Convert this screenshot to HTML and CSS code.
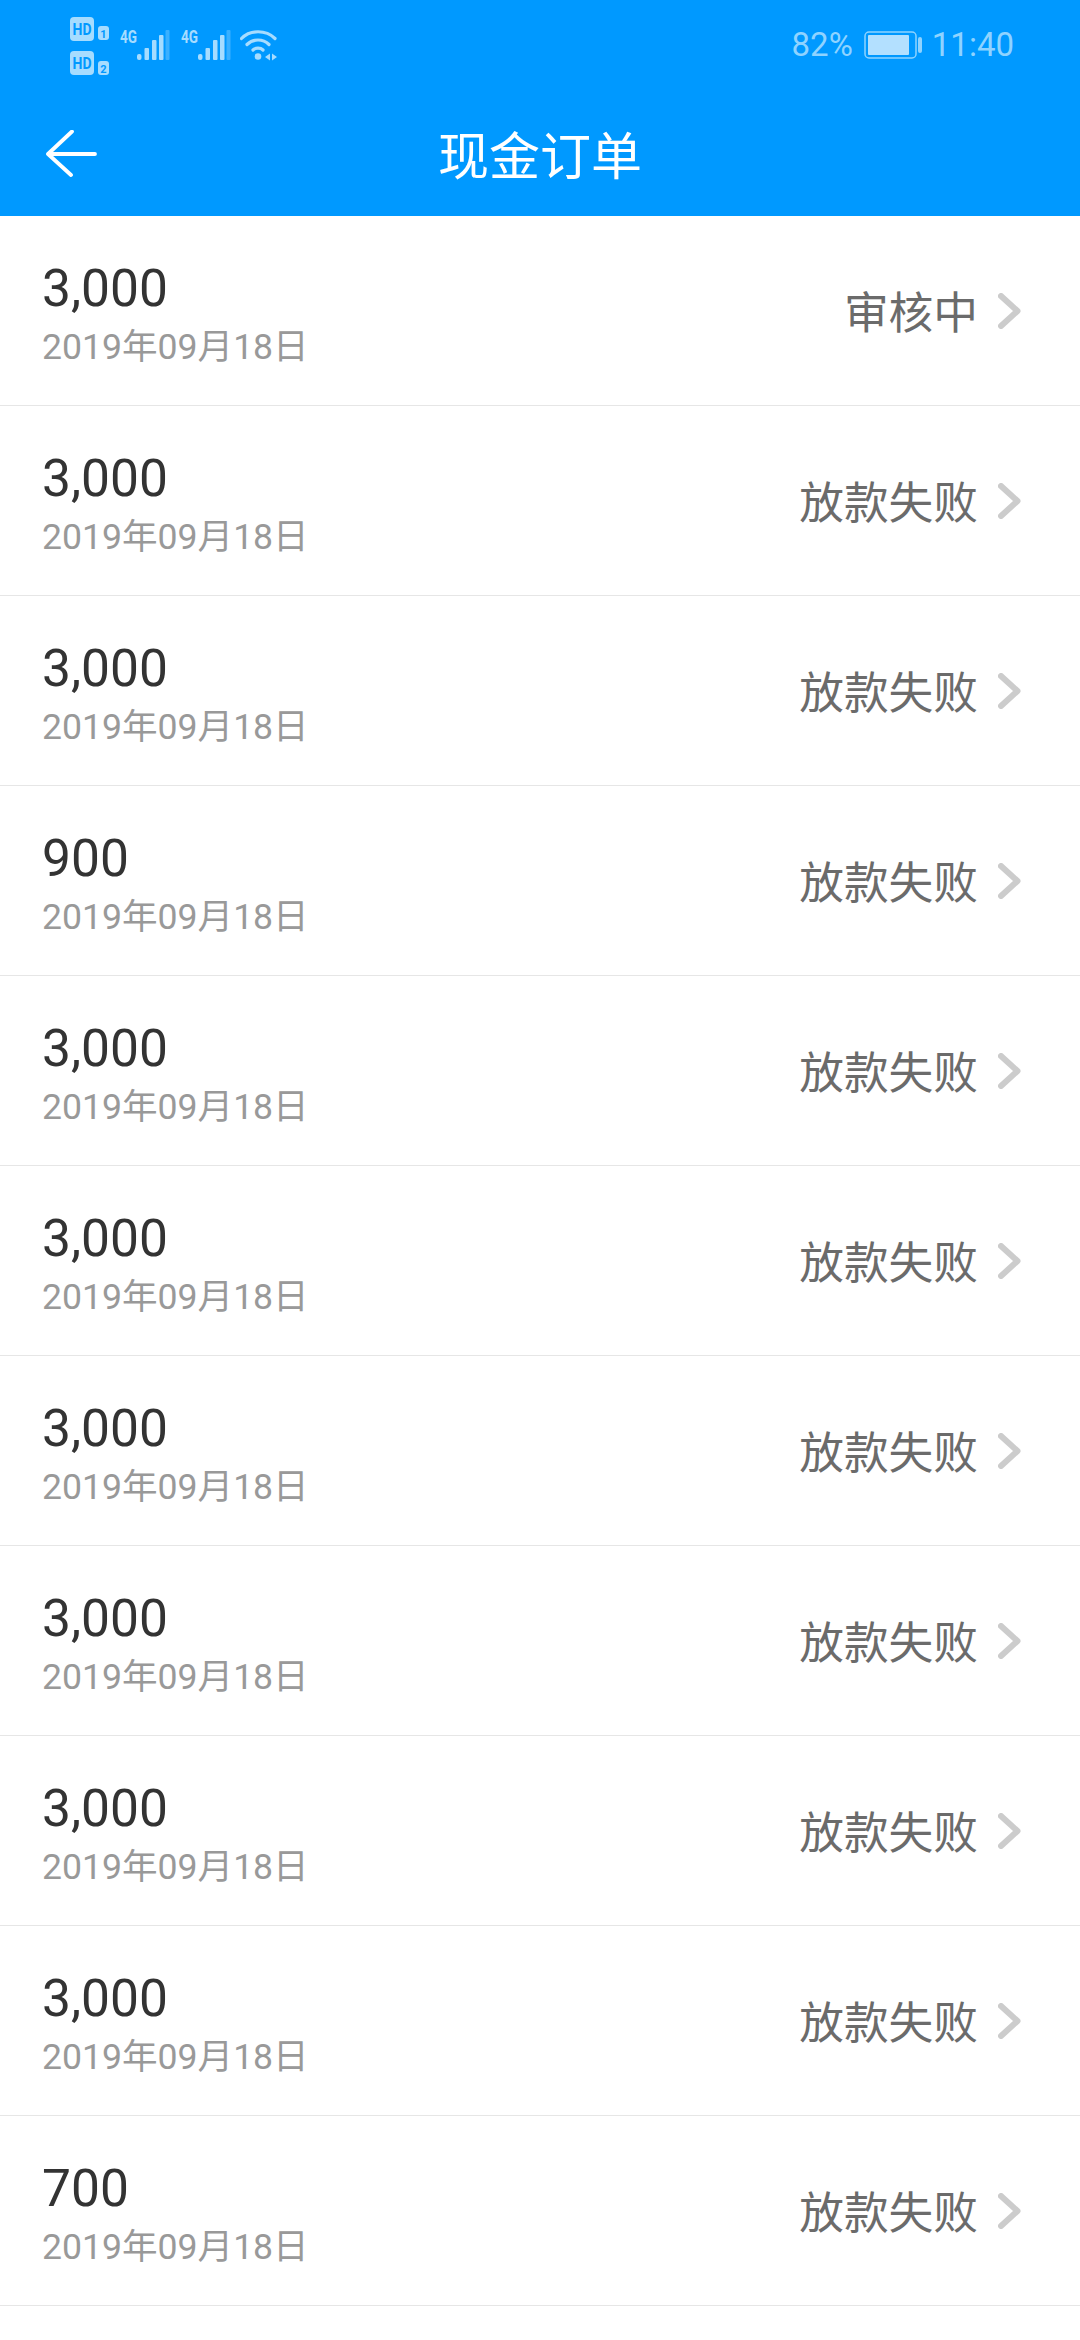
FILE: index.html
```html
<!DOCTYPE html>
<html lang="zh">
<head>
<meta charset="utf-8">
<title>现金订单</title>
<link rel="stylesheet" href="styles.css">
</head>
<body>
<header class="top">
  <div class="status">
    <div class="status-left">
      <svg class="hd" width="40" height="60" viewBox="0 0 40 60">
        <rect x="0" y="0" width="24" height="24" rx="4" fill="#a6dcff"/>
        <text x="12" y="17.500" class="hd-t" textLength="19" lengthAdjust="spacingAndGlyphs">HD</text>
        <rect x="28" y="9" width="11" height="14" rx="3" fill="#a6dcff"/>
        <text x="33.500" y="20.500" class="hd-n">1</text>
        <rect x="0" y="34" width="24" height="24" rx="4" fill="#a6dcff"/>
        <text x="12" y="51.500" class="hd-t" textLength="19" lengthAdjust="spacingAndGlyphs">HD</text>
        <rect x="28" y="44" width="11" height="14" rx="3" fill="#a6dcff"/>
        <text x="33.500" y="55.500" class="hd-n">2</text>
      </svg>
      <svg class="sig" width="52" height="42" viewBox="0 -10 52 42">
        <text x="0" y="13" class="g4" textLength="17" lengthAdjust="spacingAndGlyphs">4G</text>
        <g fill="#a6dcff"><rect x="17" y="24" width="4.500" height="6" rx="2"/><rect x="24.500" y="18" width="4.500" height="12" rx="1"/><rect x="32" y="10" width="4.500" height="20" rx="1"/><rect x="39" y="5" width="4.500" height="25" rx="1"/></g>
        <rect x="45.500" y="0" width="4" height="30" rx="1" fill="#a6dcff" opacity=".35"/>
      </svg>
      <svg class="sig" width="52" height="42" viewBox="0 -10 52 42">
        <text x="0" y="13" class="g4" textLength="17" lengthAdjust="spacingAndGlyphs">4G</text>
        <g fill="#a6dcff"><rect x="17" y="24" width="4.500" height="6" rx="2"/><rect x="24.500" y="18" width="4.500" height="12" rx="1"/><rect x="32" y="10" width="4.500" height="20" rx="1"/><rect x="39" y="5" width="4.500" height="25" rx="1"/></g>
        <rect x="45.500" y="0" width="4" height="30" rx="1" fill="#a6dcff" opacity=".35"/>
      </svg>
      <svg class="wifi" width="38" height="32" viewBox="0 0 38 32">
        <g fill="none" stroke="#a6dcff" stroke-width="3.200" stroke-linecap="round">
          <path d="M1.500 8.500C10 -0.500 26 -0.500 35 8.500"/>
          <path d="M7 14.500C13 8.500 23 8.500 29 14.500"/>
          <path d="M13 20C15.500 17.500 20.500 17.500 23 20"/>
        </g>
        <circle cx="18" cy="26.500" r="3.300" fill="#a6dcff"/>
        <path d="M30 23.500v7l-5-3.500zM32 23.500v7l5-3.500z" fill="#a6dcff"/>
      </svg>
    </div>
    <div class="status-right">
      <span>82%</span>
      <svg class="batt" width="59" height="28" viewBox="0 0 59 28">
        <rect x="1" y="1" width="51" height="26" rx="4" fill="none" stroke="#8fd3ff" stroke-width="1.500"/>
        <rect x="4" y="4" width="41" height="20" rx="1" fill="#b3e0ff"/>
        <rect x="54" y="6" width="4" height="16" rx="2" fill="#8fd3ff"/>
      </svg>
      <span>11:40</span>
    </div>
  </div>
  <div class="nav">
    <svg class="back" width="52" height="48" viewBox="0 0 52 48">
      <path d="M3 24H50M27 1.500L3 24L26 45" fill="none" stroke="#fff" stroke-width="3.800" stroke-linecap="round" stroke-linejoin="round"/>
    </svg>
    <h1 class="title">现金订单</h1>
  </div>
</header>
<main class="list">
  <a class="row"><div class="info"><div class="amount">3,000</div><div class="date">2019年09月18日</div></div><div class="state"><span>审核中</span><svg class="chev" width="24" height="36" viewBox="0 0 24 36"><path d="M3 3L19.500 18L3 33" fill="none" stroke="#ccc" stroke-width="6" stroke-linecap="round" stroke-linejoin="round"/></svg></div></a>
  <a class="row"><div class="info"><div class="amount">3,000</div><div class="date">2019年09月18日</div></div><div class="state"><span>放款失败</span><svg class="chev" width="24" height="36" viewBox="0 0 24 36"><path d="M3 3L19.500 18L3 33" fill="none" stroke="#ccc" stroke-width="6" stroke-linecap="round" stroke-linejoin="round"/></svg></div></a>
  <a class="row"><div class="info"><div class="amount">3,000</div><div class="date">2019年09月18日</div></div><div class="state"><span>放款失败</span><svg class="chev" width="24" height="36" viewBox="0 0 24 36"><path d="M3 3L19.500 18L3 33" fill="none" stroke="#ccc" stroke-width="6" stroke-linecap="round" stroke-linejoin="round"/></svg></div></a>
  <a class="row"><div class="info"><div class="amount">900</div><div class="date">2019年09月18日</div></div><div class="state"><span>放款失败</span><svg class="chev" width="24" height="36" viewBox="0 0 24 36"><path d="M3 3L19.500 18L3 33" fill="none" stroke="#ccc" stroke-width="6" stroke-linecap="round" stroke-linejoin="round"/></svg></div></a>
  <a class="row"><div class="info"><div class="amount">3,000</div><div class="date">2019年09月18日</div></div><div class="state"><span>放款失败</span><svg class="chev" width="24" height="36" viewBox="0 0 24 36"><path d="M3 3L19.500 18L3 33" fill="none" stroke="#ccc" stroke-width="6" stroke-linecap="round" stroke-linejoin="round"/></svg></div></a>
  <a class="row"><div class="info"><div class="amount">3,000</div><div class="date">2019年09月18日</div></div><div class="state"><span>放款失败</span><svg class="chev" width="24" height="36" viewBox="0 0 24 36"><path d="M3 3L19.500 18L3 33" fill="none" stroke="#ccc" stroke-width="6" stroke-linecap="round" stroke-linejoin="round"/></svg></div></a>
  <a class="row"><div class="info"><div class="amount">3,000</div><div class="date">2019年09月18日</div></div><div class="state"><span>放款失败</span><svg class="chev" width="24" height="36" viewBox="0 0 24 36"><path d="M3 3L19.500 18L3 33" fill="none" stroke="#ccc" stroke-width="6" stroke-linecap="round" stroke-linejoin="round"/></svg></div></a>
  <a class="row"><div class="info"><div class="amount">3,000</div><div class="date">2019年09月18日</div></div><div class="state"><span>放款失败</span><svg class="chev" width="24" height="36" viewBox="0 0 24 36"><path d="M3 3L19.500 18L3 33" fill="none" stroke="#ccc" stroke-width="6" stroke-linecap="round" stroke-linejoin="round"/></svg></div></a>
  <a class="row"><div class="info"><div class="amount">3,000</div><div class="date">2019年09月18日</div></div><div class="state"><span>放款失败</span><svg class="chev" width="24" height="36" viewBox="0 0 24 36"><path d="M3 3L19.500 18L3 33" fill="none" stroke="#ccc" stroke-width="6" stroke-linecap="round" stroke-linejoin="round"/></svg></div></a>
  <a class="row"><div class="info"><div class="amount">3,000</div><div class="date">2019年09月18日</div></div><div class="state"><span>放款失败</span><svg class="chev" width="24" height="36" viewBox="0 0 24 36"><path d="M3 3L19.500 18L3 33" fill="none" stroke="#ccc" stroke-width="6" stroke-linecap="round" stroke-linejoin="round"/></svg></div></a>
  <a class="row"><div class="info"><div class="amount">700</div><div class="date">2019年09月18日</div></div><div class="state"><span>放款失败</span><svg class="chev" width="24" height="36" viewBox="0 0 24 36"><path d="M3 3L19.500 18L3 33" fill="none" stroke="#ccc" stroke-width="6" stroke-linecap="round" stroke-linejoin="round"/></svg></div></a>
</main>
</body>
</html>
```
FILE: styles.css
```css
* { box-sizing: border-box; }
html, body { margin: 0; padding: 0; }
body {
  width: 1080px;
  height: 2340px;
  overflow: hidden;
  background: #fff;
  font-family: Roboto, "Noto Sans CJK SC", sans-serif;
}
.top { background: #0099ff; height: 216px; display: flex; flex-direction: column; }
.status {
  height: 88px;
  display: flex;
  justify-content: space-between;
  align-items: flex-start;
  padding: 17px 66px 0 70px;
}
.status-left { display: flex; align-items: flex-start; gap: 9px; }
.hd { margin-right: 1px; }
.sig { margin-top: 3px; }
.wifi { margin-top: 13px; margin-left: -2px; }
.hd-t { font: 700 17px Roboto, sans-serif; fill: #0099ff; text-anchor: middle; }
.hd-n { font: 700 11px Roboto, sans-serif; fill: #0099ff; text-anchor: middle; }
.g4 { font: 700 18px Roboto, sans-serif; fill: #a6dcff; }
.status-right {
  display: flex;
  align-items: center;
  gap: 9px;
  color: #8fd3ff;
  font-size: 33px;
  line-height: 60px;
  margin-top: -2px;
}
.status-right span:first-child { margin-right: 2px; }
.nav { position: relative; flex: 1; display: flex; align-items: center; justify-content: center; }
.back { position: absolute; left: 45px; top: 42px; }
.title {
  margin: 12px 0 0;
  font-size: 51px;
  font-weight: 400;
  color: #fff;
  line-height: 64px;
}
.list { display: flex; flex-direction: column; }
.row {
  height: 190px;
  padding: 42px 58px 0 42px;
  border-bottom: 1.5px solid #e6e6e6;
  display: flex;
  justify-content: space-between;
  align-items: flex-start;
}
.amount { font-size: 51.500px; line-height: 60px; color: #333; position: relative; top: 1px; }
.date { font-size: 35.600px; line-height: 44px; color: #999; margin-top: 7px; }
.state {
  display: flex;
  align-items: center;
  gap: 20px;
  margin-top: 26px;
  font-size: 44.700px;
  line-height: 60px;
  color: #6b6b6b;
}
.chev { display: block; position: relative; top: -3px; }
```
